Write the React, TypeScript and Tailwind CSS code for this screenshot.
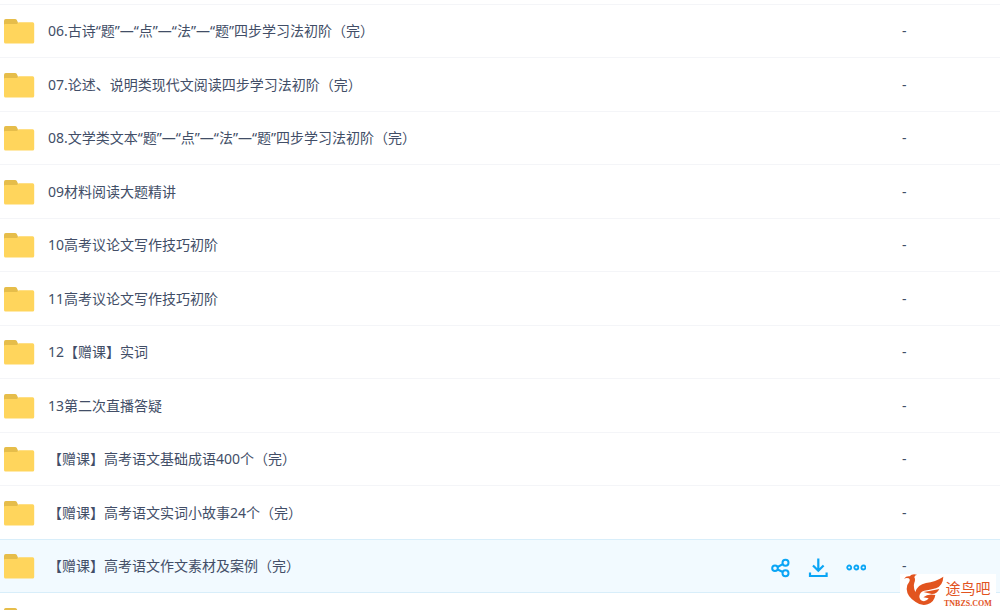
import { useState } from "react";

interface FileItem {
  name: string;
  size: string;
}

const files: FileItem[] = [
  { name: "06.古诗“题”—“点”—“法”—“题”四步学习法初阶（完）", size: "-" },
  { name: "07.论述、说明类现代文阅读四步学习法初阶（完）", size: "-" },
  { name: "08.文学类文本“题”—“点”—“法”—“题”四步学习法初阶（完）", size: "-" },
  { name: "09材料阅读大题精讲", size: "-" },
  { name: "10高考议论文写作技巧初阶", size: "-" },
  { name: "11高考议论文写作技巧初阶", size: "-" },
  { name: "12【赠课】实词", size: "-" },
  { name: "13第二次直播答疑", size: "-" },
  { name: "【赠课】高考语文基础成语400个（完）", size: "-" },
  { name: "【赠课】高考语文实词小故事24个（完）", size: "-" },
  { name: "【赠课】高考语文作文素材及案例（完）", size: "-" },
  { name: "", size: "" },
];

function FolderIcon() {
  return (
    <svg className="block h-[26px] w-8 shrink-0" viewBox="0 0 32 26" aria-hidden="true">
      <path d="M1 8V2.7Q1 1 2.7 1H12q1.2 0 1.8 1L15 4.5v4z" fill="#e6bd4a" />
      <path d="M1 7q0-1 1-1h12l1.6-1.7h14q1.6 0 1.6 1.6v18q0 1.6-1.6 1.6h-27Q1 25.5 1 23.9z" fill="#ffd55c" />
    </svg>
  );
}

function ShareIcon() {
  return (
    <svg className="block h-5 w-5" viewBox="0 0 20 20" fill="none" stroke="#0aa5f5" strokeWidth="2" aria-hidden="true">
      <circle cx="5" cy="10.2" r="2.8" />
      <circle cx="15.5" cy="4.8" r="3" />
      <circle cx="15.5" cy="15.2" r="3" />
      <path d="M7.6 9 12.8 6.2M7.6 11.5l5.2 2.5" />
    </svg>
  );
}

function DownloadIcon() {
  return (
    <svg className="block h-5 w-5" viewBox="0 0 20 20" fill="none" stroke="#0aa5f5" strokeWidth="2.2" aria-hidden="true">
      <path d="M10.3 .5v12M5 7.5l5.3 5.3 5.3-5.3M2 14.6v3.4h16.6v-3.4" />
    </svg>
  );
}

function MoreIcon() {
  return (
    <svg className="block h-5 w-5" viewBox="0 0 20 20" fill="none" stroke="#0aa5f5" strokeWidth="1.8" aria-hidden="true">
      <circle cx="3.2" cy="9.5" r="2" />
      <circle cx="10.3" cy="9.5" r="2" />
      <circle cx="17.4" cy="9.5" r="2" />
    </svg>
  );
}

function RowActions() {
  return (
    <div className="flex shrink-0 items-center gap-[18px] pt-1">
      <button type="button" aria-label="分享" className="cursor-pointer">
        <ShareIcon />
      </button>
      <button type="button" aria-label="下载" className="cursor-pointer">
        <DownloadIcon />
      </button>
      <button type="button" aria-label="更多" className="cursor-pointer">
        <MoreIcon />
      </button>
    </div>
  );
}

function SiteBadge() {
  return (
    <div className="absolute right-1 bottom-0 flex h-9 w-24 bg-white pl-1">
      <svg className="block h-8 w-10 shrink-0" viewBox="0 0 120 96" fill="#e2541f" aria-hidden="true">
        <path d="M0 14Q7 5 17 7Q24 -2 39 2Q31 4 31 10Q35 16 31 26Q27 38 34 54Q41 32 66 27Q94 24 118 8Q117 34 96 43Q76 48 61 50Q47 54 46 67Q46 81 60 82Q69 81 74 73L58 70Q72 58 94 63Q91 84 71 91Q52 97 35 84Q9 68 8 45Q8 32 15 25Q20 16 14 13Q8 10 0 14Z" />
        <path d="M58 54Q78 51 106 45Q99 60 84 60Q70 57 58 54Z" />
      </svg>
      <div className="flex flex-col items-center justify-end pb-0.5 text-[#e2541f]">
        <span className="font-['Noto_Sans_CJK_SC',sans-serif] text-[15px] leading-[22px]">途鸟吧</span>
        <span className="font-['Liberation_Serif',serif] text-[8px] leading-[9px] font-bold">TNBZS.COM</span>
      </div>
    </div>
  );
}

export default function App() {
  const [active, setActive] = useState(10);

  return (
    <main className="relative h-screen overflow-hidden bg-white pt-1 font-['Noto_Sans','Noto_Sans_CJK_SC',sans-serif] text-[14px] leading-5 text-[#424e67]">
      <table className="w-full table-fixed border-collapse">
        <colgroup>
          <col />
          <col className="w-[98px]" />
        </colgroup>
        <tbody>
          {files.map((file, index) => (
            <tr
              key={index}
              onMouseEnter={() => setActive(index)}
              className={
                index === active
                  ? "h-[53px] border-y border-[#d8eefa] bg-[#f2faff] even:h-[54px]"
                  : "h-[53px] border-t border-[#f4f5f8] even:h-[54px]"
              }
            >
              <td className="p-0">
                <div className="flex items-center pr-9 pl-[3px]">
                  <FolderIcon />
                  <span className="min-w-0 flex-1 truncate pl-[13px]">{file.name}</span>
                  {index === active && <RowActions />}
                </div>
              </td>
              <td className="p-0 text-[#424e67]">{file.size}</td>
            </tr>
          ))}
        </tbody>
      </table>
      <SiteBadge />
    </main>
  );
}
